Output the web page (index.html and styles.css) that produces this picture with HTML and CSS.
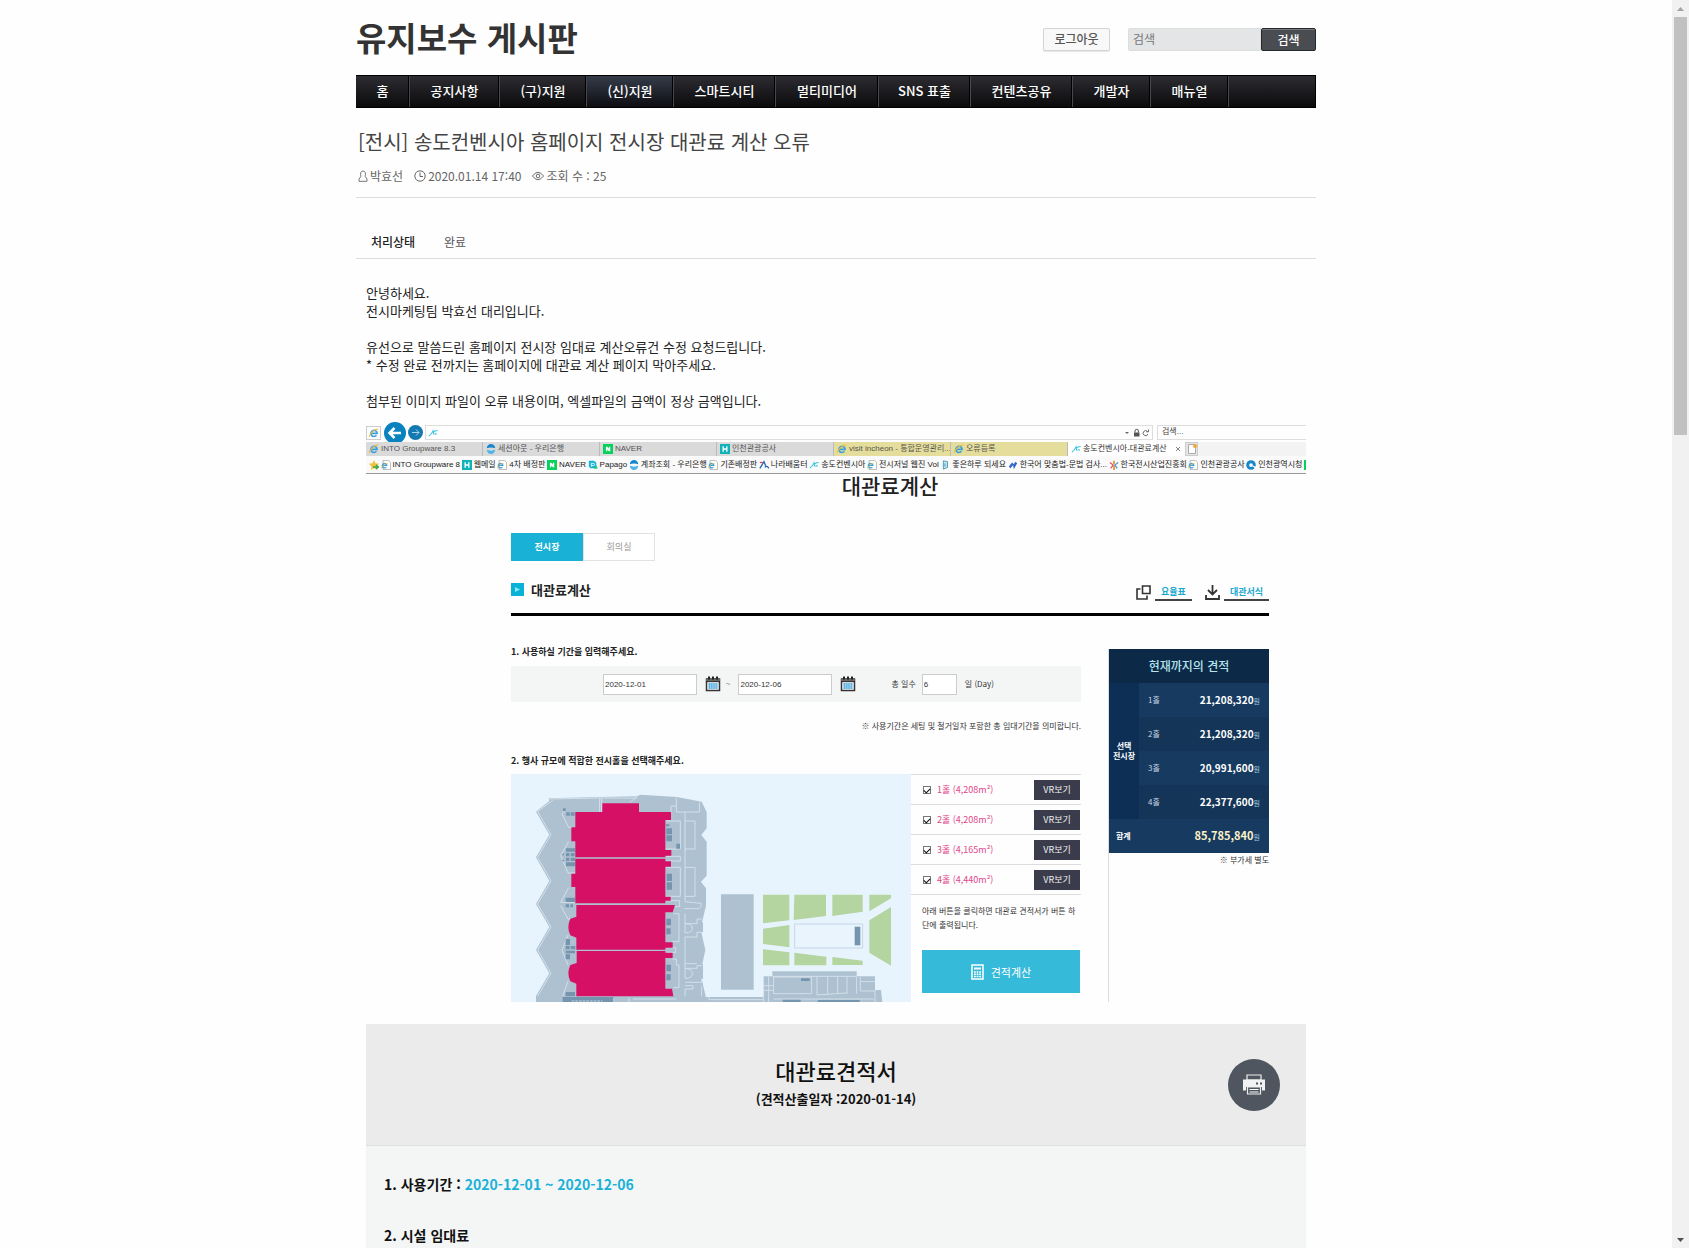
FILE: index.html
```html
<!DOCTYPE html>
<html lang="ko">
<head>
<meta charset="utf-8">
<meta name="viewport" content="width=device-width, initial-scale=1">
<title>유지보수 게시판</title>
<link rel="stylesheet" href="styles.css">
</head>
<body>
<svg class="defs" width="0" height="0" aria-hidden="true">
  <symbol id="ie" viewBox="0 0 12 12"><path d="M2.3 6.4H9.7A3.7 3.7 0 1 0 8.9 8.8" fill="none" stroke="#3aa0dc" stroke-width="2"/><path d="M.8 10.6C-.4 8 7.500 .3 11 1.400" fill="none" stroke="#f0b93a" stroke-width="1.300"/></symbol>
  <symbol id="iepage" viewBox="0 0 12 12"><path d="M2.500.5h6.500l2.500 2.500v8.500h-9z" fill="#fff" stroke="#999" stroke-width=".8"/><path d="M1.500 6.500H7A2.700 2.700 0 1 0 6.400 8.500" fill="none" stroke="#3aa0dc" stroke-width="1.600"/><path d="M.6 10C0 8 5 3.500 8 4" fill="none" stroke="#f0b93a"/></symbol>
  <symbol id="woori" viewBox="0 0 12 12"><path d="M1 5a5 5 0 0 1 10 0Q6 3.500 1 5z" fill="#1487cf"/><path d="M1 7a5 5 0 0 0 10 0Q6 9 1 7z" fill="#4bb4e8"/></symbol>
  <symbol id="naver" viewBox="0 0 12 12"><path d="M0 0h12v12H0z" fill="#06d15c"/><path d="M3.500 3.200h1.800l1.700 2.500V3.200h1.700v5.600H6.900L5.200 6.300v2.500H3.500z" fill="#fff"/></symbol>
  <symbol id="into" viewBox="0 0 12 12"><path d="M0 0h12v12H0z" fill="#12b3b8"/><path d="M3.800 2.800v6.400M8.200 2.800v6.400M3.800 6h4.400" stroke="#fff" stroke-width="1.600"/></symbol>
  <symbol id="songdo" viewBox="0 0 12 12"><path d="M1 9.500Q4.500 7.500 6 3.500L7 8M7 4.500Q9 3 11.500 3M8 7h2.500" fill="none" stroke="#3bc6e0" stroke-width="1.300"/></symbol>
  <symbol id="cal" viewBox="0 0 16 16"><path d="M1.500 3h13v11.500h-13z" fill="#fff" stroke="#333" stroke-width="1.500"/><path d="M1 2.500h14v3.200H1z" fill="#666"/><path d="M4 .5v3M8 .5v3M12 .5v3" stroke="#222" stroke-width="2"/><path d="M1 5.700h14" stroke="#222"/><path d="M3.500 8h9M3.500 10h9M3.500 12h9" stroke="#2496d8" stroke-width="1.500" stroke-dasharray="1.500 .4"/></symbol>
</svg>

<div class="page">
  <header class="site-header wrap">
    <h1>유지보수 게시판</h1>
    <div class="tools">
      <button class="logout" type="button">로그아웃</button>
      <form class="search">
        <input type="search" placeholder="검색" aria-label="검색어">
        <button type="button">검색</button>
      </form>
    </div>
  </header>

  <nav class="menu wrap">
    <a href="#">홈</a><a href="#">공지사항</a><a href="#">(구)지원</a><a href="#" class="on">(신)지원</a><a href="#">스마트시티</a><a href="#">멀티미디어</a><a href="#">SNS 표출</a><a href="#">컨텐츠공유</a><a href="#">개발자</a><a href="#">매뉴얼</a>
  </nav>

  <main class="wrap post">
    <header class="post-head">
      <h2>[전시] 송도컨벤시아 홈페이지 전시장 대관료 계산 오류</h2>
      <div class="meta">
        <span><svg width="10" height="12" viewBox="0 0 10 12"><path d="M3 6.200C1.800 4 2.600 1 5 1s3.200 3 2 5.200L9 9v2.300H1V9z" fill="none" stroke="#777"/></svg>박효선</span>
        <span><svg width="12" height="12" viewBox="0 0 12 12"><circle cx="6" cy="6" r="5.200" fill="none" stroke="#666"/><path d="M6 2.500V6.500H9" fill="none" stroke="#666"/></svg>2020.01.14 17:40</span>
        <span><svg width="12" height="10" viewBox="0 0 12 10"><path d="M.5 5Q6-2.500 11.500 5Q6 12.500 .5 5z" fill="none" stroke="#666"/><circle cx="6" cy="5" r="1.800" fill="none" stroke="#666"/></svg>조회 수 : 25</span>
      </div>
    </header>
    <dl class="status"><dt>처리상태</dt><dd>완료</dd></dl>

    <article class="content">
      <p>안녕하세요.<br>전시마케팅팀 박효선 대리입니다.</p>
      <p>유선으로 말씀드린 홈페이지 전시장 임대료 계산오류건 수정 요청드립니다.<br>* 수정 완료 전까지는 홈페이지에 대관료 계산 페이지 막아주세요.</p>
      <p>첨부된 이미지 파일이 오류 내용이며, 엑셀파일의 금액이 정상 금액입니다.</p>

      <section class="browser">
        <div class="address">
          <span class="home"><svg width="10" height="10"><use href="#ie"/></svg></span>
          <svg class="back" width="22" height="22" viewBox="0 0 22 22"><circle cx="11" cy="11" r="11" fill="#0a82bf"/><path d="M17 11H6M10.500 6L5.500 11l5 5" fill="none" stroke="#fff" stroke-width="2.500"/></svg>
          <svg class="fwd" width="15" height="15" viewBox="0 0 15 15"><circle cx="7.500" cy="7.500" r="7.500" fill="#1479b0"/><path d="M4 7.500h7M8 4.500l3 3-3 3" fill="none" stroke="#a9d3ea"/></svg>
          <div class="url">
            <svg width="10" height="10"><use href="#songdo"/></svg>
            <svg class="end" width="26" height="10" viewBox="0 0 26 10"><path d="M1 4h4L3 6z" fill="#666"/><path d="M10 4.500h5.500v4H10z" fill="#555"/><path d="M11 4.500V3a1.700 1.700 0 0 1 3.400 0v1.500" fill="none" stroke="#555"/><path d="M23.500 3.500A2.500 2.500 0 1 0 24 6M24.500 1.500v2.300h-2.300" fill="none" stroke="#666"/></svg>
          </div>
          <div class="find">검색...</div>
        </div>
        <div class="tabs">
          <button type="button"><svg width="10" height="10"><use href="#ie"/></svg>INTO Groupware 8.3</button>
          <button type="button"><svg width="10" height="10"><use href="#woori"/></svg>세션아웃 - 우리은행</button>
          <button type="button"><svg width="10" height="10"><use href="#naver"/></svg>NAVER</button>
          <button type="button"><svg width="10" height="10"><use href="#into"/></svg>인천관광공사</button>
          <button type="button" class="hot"><svg width="10" height="10"><use href="#ie"/></svg>visit incheon - 통합운영관리...</button>
          <button type="button" class="hot"><svg width="10" height="10"><use href="#ie"/></svg>오류등록</button>
          <button type="button" class="now"><svg width="10" height="10"><use href="#songdo"/></svg>송도컨벤시아-대관료계산<svg class="x" width="6" height="6" viewBox="0 0 6 6"><path d="M1 1l4 4M5 1L1 5" stroke="#888"/></svg></button>
          <span class="new"><svg width="10" height="10" viewBox="0 0 10 10"><path d="M1.500.5h7v9h-7z" fill="#fff" stroke="#aaa"/><circle cx="8" cy="2" r="2" fill="#f0a63a"/></svg></span>
        </div>
        <div class="marks">
          <a href="#"><svg width="10" height="10" viewBox="0 0 10 10"><path d="M5 0l1.500 3.300L10 3.700 7.500 6.200 8 10 5 8 2 10l.5-3.800L0 3.700l3.500-.4z" fill="#f0c23a"/><path d="M4 7h5M7 5l2.500 2L7 9" fill="none" stroke="#35a853" stroke-width="1.500"/></svg></a>
          <a href="#"><svg width="10" height="10"><use href="#iepage"/></svg>INTO Groupware 8</a>
          <a href="#"><svg width="10" height="10"><use href="#into"/></svg>웹메일</a>
          <a href="#"><svg width="10" height="10"><use href="#iepage"/></svg>4차 배정판</a>
          <a href="#"><svg width="10" height="10"><use href="#naver"/></svg>NAVER</a>
          <a href="#"><svg width="10" height="10" viewBox="0 0 12 12"><path d="M1 1h6l3 2v7H3L1 8z" fill="#18b5d8"/><path d="M4 8V4h2.500a1.300 1.300 0 0 1 0 2.600H4" stroke="#fff" fill="none"/><path d="M7 11l5-1-2-3z" fill="#2bd064"/></svg>Papago</a>
          <a href="#"><svg width="10" height="10"><use href="#woori"/></svg>계좌조회 - 우리은행</a>
          <a href="#"><svg width="10" height="10"><use href="#iepage"/></svg>기존배정판</a>
          <a href="#"><svg width="10" height="10" viewBox="0 0 12 12"><path d="M1 10L6 2l2 5" fill="none" stroke="#2467b3" stroke-width="1.600"/><path d="M1 3h4" stroke="#e3475a" stroke-width="1.500"/><path d="M7 9q2-3 5 1" fill="none" stroke="#2467b3" stroke-width="1.500"/></svg>나라배움터</a>
          <a href="#"><svg width="10" height="10"><use href="#songdo"/></svg>송도컨벤시아</a>
          <a href="#"><svg width="10" height="10"><use href="#iepage"/></svg>전시저널 웹진 Vol</a>
          <a href="#"><svg width="10" height="10" viewBox="0 0 12 12"><path d="M4 1l5 1v7l-5 2z" fill="#c6e6ef" stroke="#3c8fa8"/><path d="M6 4v4" stroke="#3c8fa8"/></svg>좋은하루 되세요</a>
          <a href="#"><svg width="10" height="10" viewBox="0 0 12 12"><path d="M3 5l2-2 2 2-4 5-2-2zM6 6l3-4 2 2-4 7z" fill="#3568c9"/></svg>한국어 맞춤법-문법 검사...</a>
          <a href="#"><svg width="10" height="10" viewBox="0 0 12 12"><path d="M6 1v4M6 7v5" stroke="#f08a24" stroke-width="2"/><path d="M1 3l4 3-3 4" fill="none" stroke="#e8505c" stroke-width="1.500"/><path d="M11 3L7 6l3 4" fill="none" stroke="#3b9ad6" stroke-width="1.500"/></svg>한국전시산업진흥회</a>
          <a href="#"><svg width="10" height="10"><use href="#iepage"/></svg>인천관광공사</a>
          <a href="#"><svg width="10" height="10" viewBox="0 0 12 12"><circle cx="6" cy="6" r="4" fill="none" stroke="#1687c9" stroke-width="3.500"/><path d="M6 6l6 2v3z" fill="#fff"/></svg>인천광역시청</a>
          <i></i>
        </div>
      </section>

      <section class="calc">
        <h3>대관료계산</h3>
        <div class="kinds"><button type="button" class="on">전시장</button><button type="button">회의실</button></div>
        <div class="calc-head">
          <h4><svg width="13" height="13" viewBox="0 0 13 13"><path d="M0 0h13v13H0z" fill="#08b2d6"/><path d="M4 4l5 2.500-5 2.500z" fill="#8fe6f5"/></svg>대관료계산</h4>
          <div class="files">
            <svg width="15" height="15" viewBox="0 0 15 15"><path d="M6.500 1h7.500v7.500H6.500zM4.500 4H1v10h10v-3.500" fill="none" stroke="#333" stroke-width="1.600"/></svg>
            <a href="#">요율표</a>
            <svg width="15" height="15" viewBox="0 0 15 15"><path d="M7.500 0v9.500M3 5l4.500 4.500L12 5M1 10v4h13v-4" fill="none" stroke="#333" stroke-width="1.800"/></svg>
            <a href="#">대관서식</a>
          </div>
        </div>
        <div class="cols">
          <div class="left">
            <h5>1. 사용하실 기간을 입력해주세요.</h5>
            <div class="period">
              <input class="date" type="text" value="2020-12-01" aria-label="시작일">
              <svg width="16" height="16"><use href="#cal"/></svg>
              <span>~</span>
              <input class="date" type="text" value="2020-12-06" aria-label="종료일">
              <svg width="16" height="16"><use href="#cal"/></svg>
              <label for="days">총 일수</label>
              <input class="days" id="days" type="text" value="6">
              <span class="unit">일 (Day)</span>
            </div>
            <p class="note">※ 사용기간은 세팅 및 철거일자 포함한 총 임대기간을 의미합니다.</p>
            <h5>2. 행사 규모에 적합한 전시홀을 선택해주세요.</h5>
            <div class="halls">
              <svg class="map" viewBox="32 25 1200 684" role="img" aria-label="전시장 배치도">
                <path d="M145 98L300 94 410 92 420 87 530 94 604 108 619 140V188L603 208 619 228V330L602 348 617 368V420L605 470H608V500H603L615 553 606 595H608V640H604L616 692V694H790V632H816V617H1069V632H1124V673H1142L1146 709H107V691L147 623 107 553 147 484 107 415 147 346 107 275 147 207 107 138 147 106z" fill="#aec1d1"/>
                <path d="M662 386h98v286h-98z" fill="#aec1d1"/>
                <g fill="none" stroke="#d3e0ea" stroke-width="3">
                  <path d="M147 100L300 97H410M157 104L112 138l40 69-40 68 40 71-40 69 40 69-40 69 40 70-40 68M298 97v42M304 97v42M388 111l24-20M528 97v42h70v-30M528 121h-16v20M498 166h42v84h-44M554 140v110h30V166h-30M498 272h42v14h-42M554 250v142h30V305h-30M498 305h42v87h-44M498 405h40v18h-40M554 392v16l48 5v10l-6 6h-44M520 444h16v84h-22M554 444v30h36v-14h15M554 474v28q22 0 22-14t-22-14M554 514h36v-14h15M554 514v80h36M500 546h26v14h-26M516 580h12v18h8v68h-16M554 594v14h36v-8h15M554 608v30q22 0 22-14t-22-16M554 650h50v-12M554 660h24v10h-24v22M604 692v-30"/>
                  <path d="M193 135l-8 10 20 40h20M205 228l-24 42 22 52h22M205 366l-24 44h44M181 420l22 40h22M203 508l-18 46 18 44M203 646l-16 45M340 696v13M386 696v13M398 700h130M626 694v8h163M790 632v77M805 632v77M790 660h28M790 674h28M820 634h114v50H820zM950 634v54l90-6M982 634v50M1012 634v50M1040 634v50M1069 634v50M1080 648h43M1080 634v42h44M1124 673v36M816 632h253M820 700h300"/>
                </g>
                <g fill="#7594ae">
                  <path d="M188 128h8v8h-8zM198 140h10v10h-10zM211 140h12v10h-12zM498 188h17v18h-17zM498 209h17v18h-17zM528 234h11v15h-11zM499 324h16v22h-16zM499 350h16v22h-16zM497 176h10v6h-10zM197 248h28v10h-28zM197 262h10v10h-10zM211 262h12v10h-12zM197 276h10v10h-10zM211 276h14v10h-14zM197 290h28v12h-28zM186 264h5v5h-5zM186 282h5v5h-5zM196 396h28v13h-28zM196 416h10v9h-10zM210 416h8v9h-8zM498 459h14v20h-14zM498 488h13v18h-13zM196 520h13v18h-13zM196 541h12v10h-12zM211 541h14v10h-14zM196 555h28v8h-28zM196 566h13v15h-13zM498 597h14v20h-14zM498 626h13v18h-13zM196 679h28v13h-28zM187 694h152v15H187zM902 638h26v8h-26zM847 702h54v7h-54zM952 703h126v6H952z"/>
                </g>
                <path d="M214 706h92" stroke="#c3d2de" stroke-width="3" stroke-dasharray="8 3"/>
                <path d="M306 113h110v26h96v24h-17v90h18v17h-18v5H225V227h-12v-42h12v-46h81zM225 279h270v8h17v16h-17v90h16v12h-16v8H225v-49h-12v-40h12zM228 418h296l-7 22h-22v90h22v16h-22v6H228v-36l-18-7q-12-25 0-50l18-6zM229 556h266v5h22v16h-22v92h20l4 23H228v-38l-18-7q-12-25 0-49l19-6z" fill="#d61165"/>
                <g fill="#b4d59f"><path d="M788 387h79v77l-79 9zM882 387h95v64l-97 12zM996 387h91v51l-91 13zM1107 387h65v11l-65 39zM1172 424v176l-65-39V464zM788 489l79-11v67l-79-10zM788 551l79 9v39h-79zM882 561l96 12v26h-96zM996 574l91 11v13h-91z"/></g>
                <path d="M883 475h204v72H883z" fill="#eaf4fc" stroke="#c6d5e6" stroke-width="3"/>
                <path d="M1063 483h17v56h-17z" fill="#7594ae"/>
              </svg>
              <div class="pick">
                <ul>
                  <li><label><input type="checkbox" checked>1홀 (4,208m²)</label><button type="button">VR보기</button></li>
                  <li><label><input type="checkbox" checked>2홀 (4,208m²)</label><button type="button">VR보기</button></li>
                  <li><label><input type="checkbox" checked>3홀 (4,165m²)</label><button type="button">VR보기</button></li>
                  <li><label><input type="checkbox" checked>4홀 (4,440m²)</label><button type="button">VR보기</button></li>
                </ul>
                <p>아래 버튼을 클릭하면 대관료 견적서가 버튼 하<br>단에 출력됩니다.</p>
                <button type="button" class="go"><svg width="13" height="16" viewBox="0 0 13 16"><path d="M1 1h11v14H1z" fill="none" stroke="#fff" stroke-width="1.500"/><path d="M3 4.500h7" stroke="#fff" stroke-width="2"/><path d="M3 8h7M3 10.300h7M3 12.600h7" stroke="#fff" stroke-width="1.500" stroke-dasharray="1.800 .8"/></svg>견적계산</button>
              </div>
            </div>
          </div>
          <aside class="quote">
            <table>
              <thead><tr><th colspan="3">현재까지의 견적</th></tr></thead>
              <tbody>
                <tr><th class="grp" rowspan="4">선택<br>전시장</th><td>1홀</td><td class="amt"><b>21,208,320</b>원</td></tr>
                <tr class="dark"><td>2홀</td><td class="amt"><b>21,208,320</b>원</td></tr>
                <tr><td>3홀</td><td class="amt"><b>20,991,600</b>원</td></tr>
                <tr class="dark"><td>4홀</td><td class="amt"><b>22,377,600</b>원</td></tr>
              </tbody>
              <tfoot><tr><th>합계</th><td class="amt" colspan="2"><b>85,785,840</b>원</td></tr></tfoot>
            </table>
            <p>※ 부가세 별도</p>
          </aside>
        </div>
      </section>

      <section class="estimate">
        <header>
          <div class="ttl"><h3>대관료견적서</h3><p>(견적산출일자 :2020-01-14)</p></div>
          <button type="button" aria-label="인쇄"><svg width="24" height="22" viewBox="0 0 24 22"><path d="M5 1h14v5H5z" fill="none" stroke="#eee" stroke-width="1.200"/><path d="M1 5.500h22v11h-3V13H4v3.500H1z" fill="#f2f2f2"/><path d="M5.500 13h13v7h-13z" fill="#4f5660" stroke="#eee" stroke-width="1.200"/><path d="M7.500 15.500h9M7.500 18h9" stroke="#fff"/><path d="M14 8.500h2v2h-2zM18 8.500h2v2h-2z" fill="#4f5660"/></svg></button>
        </header>
        <div class="est-body">
          <h4>1. 사용기간 : <span>2020-12-01 ~ 2020-12-06</span></h4>
          <h4>2. 시설 임대료</h4>
        </div>
      </section>
    </article>
  </main>
</div>
<div class="scroll" aria-hidden="true">
  <svg width="17" height="17" viewBox="0 0 17 17"><path d="M5 11h7L8.500 7z" fill="#a3a3a3"/></svg>
  <div class="thumb"></div>
  <svg class="down" width="17" height="17" viewBox="0 0 17 17"><path d="M5 7h7l-3.500 4z" fill="#505050"/></svg>
</div>
</body>
</html>
```
FILE: styles.css
```css
* { box-sizing: border-box; }
body, h1, h2, h3, h4, h5, p, dl, dd, ul { margin: 0; padding: 0; }
body {
  display: flex;
  height: 100vh;
  overflow: hidden;
  background: #fefefe;
  color: #333;
  font: 13px/18px "Noto Sans CJK KR", "Noto Sans", sans-serif;
}
button, input { font: inherit; margin: 0; padding: 0; border: 0; border-radius: 0; }
button { cursor: pointer; white-space: nowrap; }
a { color: inherit; text-decoration: none; }
svg { flex: none; }
.defs { position: absolute; }

.page { flex: 1; display: flex; flex-direction: column; min-width: 0; overflow: hidden; }
.wrap { width: 100%; max-width: 960px; margin: 0 auto; }

.site-header { display: flex; justify-content: space-between; align-items: center; height: 75px; padding-top: 4px; flex: none; }
h1 { padding-bottom: 6px; font-size: 33px; line-height: 48px; font-weight: 700; }
.tools { display: flex; gap: 18px; }
.logout { width: 67px; height: 23px; padding-bottom: 2px; border: 1px solid #d5d5d5; border-radius: 2px; background: #f8f8f8; box-shadow: 0 1px 1px #e4e4e4; color: #555; font-size: 12px; line-height: 18px; font-weight: 500; }
.search { display: flex; width: 188px; height: 23px; }
.search input { flex: 1; min-width: 0; padding: 0 4px 2px; border: 1px solid #dcdddd; border-radius: 2px 0 0 2px; background: #e4e5e7; font-size: 12px; line-height: 18px; }
.search input::placeholder { color: #777; }
.search button { width: 55px; border: 1px solid #25282d; border-radius: 2px; background: #494d52; box-shadow: inset 0 1px #777b80; color: #fff; font-size: 12px; line-height: 18px; font-weight: 500; }

.menu { display: grid; grid-template-columns: 54px 90px 87px 87px 102px 103px 92px 102px 78px 78px; height: 33px; flex: none; border: solid #000; border-width: 1px 1px 1px 0; background: linear-gradient(#2c2c32, #0b0b0c); }
.menu a { border-right: 1px solid #48484c; box-shadow: inset -1px 0 #000; color: #fff; font-weight: 500; line-height: 30px; text-align: center; white-space: nowrap; }
.menu .on { background: linear-gradient(#353c49, #0d0e12); }

.post { flex: 1; display: flex; flex-direction: column; }
.post-head { padding: 18px 2px 12px; border-bottom: 1px solid #ddd; }
h2 { font-size: 20px; line-height: 32px; font-weight: 400; color: #444; }
.meta { display: flex; gap: 11px; margin-top: 9px; color: #666; font-size: 12px; }
.meta span { display: flex; align-items: center; gap: 2px; }
.status { display: flex; margin-top: 28px; padding: 7px 15px; border-bottom: 1px solid #ddd; font-size: 12px; }
dt { width: 73px; color: #222; font-weight: 500; }
dd { color: #555; }
.content { flex: 1; display: flex; flex-direction: column; padding: 25px 10px 0; color: #222; }
.content > p { margin-bottom: 18px; }

.browser { margin-top: -6px; font: 8px/12px "Liberation Sans", "Noto Sans CJK KR", sans-serif; color: #444; }
.address { display: flex; align-items: center; height: 20px; padding-top: 1px; }
.home { display: grid; place-items: center; width: 15px; height: 14px; border: 1px solid #ccc; }
.back { margin: -1px 0 -1px 3px; }
.fwd { margin: 0 2px; }
.url { flex: 1; display: flex; align-items: center; height: 15px; padding: 0 2px; border: 1px solid #ddd; }
.url .end { margin-left: auto; }
.find { width: 149px; height: 15px; margin-left: 4px; padding-left: 4px; border: 1px solid #ddd; border-right: 0; }
.tabs { display: flex; height: 14px; background: #f3f3f3; }
.tabs button { display: flex; align-items: center; gap: 2px; flex: 0 1 117px; min-width: 0; padding: 0 1px 0 3px; border-right: 1px solid #bbb; background: #dadada; color: #555; overflow: hidden; }
.tabs .hot { background: #e5dd9b; }
.tabs .now { padding-right: 4px; background: #fff; color: #333; border-right: 0; }
.tabs .x { margin-left: auto; }
.new { display: grid; place-items: center; width: 13px; border: 1px solid #ccc; background: #e6e6e6; }
.marks { display: flex; justify-content: space-between; align-items: center; height: 18px; padding-left: 3px; border-bottom: 1px solid #999; background: #fafafa; color: #222; white-space: nowrap; }
.marks a { display: flex; align-items: center; gap: 2px; }
.marks i { width: 2px; height: 10px; background: #06d15c; }

.calc { padding: 0 37px 0 145px; font-size: 8px; line-height: 14px; color: #333; }
.calc h3 { text-align: center; font-size: 21px; line-height: 22px; font-weight: 500; color: #222; }
.kinds { display: flex; height: 28px; margin-top: 37px; }
.kinds button { width: 72px; border: 1px solid #e2e2e2; background: #fff; color: #999; font-size: 9px; }
.kinds .on { border-color: #19b1d6; background: #19b1d6; color: #fff; font-weight: 700; }
.calc-head { display: flex; justify-content: space-between; align-items: center; height: 55px; padding-top: 5px; border-bottom: 3px solid #000; }
.calc h4 { display: flex; align-items: center; gap: 7px; font-size: 13px; line-height: 20px; font-weight: 700; color: #222; }
.files { display: flex; align-items: center; gap: 4px; margin-top: 6px; }
.files a { padding: 0 6px; border-bottom: 2px solid #444; color: #1aa9cf; font-size: 9px; font-weight: 700; }
.files a + svg { margin-left: 9px; }
.cols { display: flex; justify-content: space-between; margin-top: 29px; }
.left { width: 570px; }
.calc h5 { font-size: 9px; line-height: 14px; font-weight: 700; color: #222; }
.period { display: flex; align-items: center; height: 36px; margin-top: 7px; padding-left: 92px; background: #f4f6f6; }
.period input { height: 21px; padding: 0 1px; border: 1px solid #ccc; background: #fff; font: 8px/14px "Liberation Sans", sans-serif; color: #333; }
.period .date { width: 94px; }
.period svg { margin: 0 5px 0 8px; }
.period span { margin-right: 8px; }
.period label { margin: 0 6px 0 30px; }
.period .days { width: 35px; }
.period .unit { margin-left: 8px; }
.note { margin: 17px 0 21px; text-align: right; }
.halls { display: flex; height: 228px; margin-top: 6px; }
.map { width: 400px; height: 228px; background: #e8f4fd; }
.pick { flex: 1; border-top: 1px solid #ddd; }
.pick ul { list-style: none; }
.pick li { display: flex; justify-content: space-between; align-items: center; height: 30px; padding: 0 1px 0 12px; border-bottom: 1px solid #ddd; }
.pick label { display: flex; align-items: center; gap: 6px; color: #e0468b; font-size: 9px; }
.pick input { appearance: none; display: grid; place-items: center; width: 8px; height: 8px; border: 1px solid #777; background: #fff; color: #111; }
.pick input::after { content: ""; width: 5px; height: 3px; border: solid #111; border-width: 0 0 1px 1px; rotate: -45deg; }
.pick li button { width: 46px; height: 20px; background: #3a3c4c; color: #eee; font-size: 9px; }
.pick p { margin: 9px 0 0 11px; white-space: nowrap; }
.go { display: flex; align-items: center; justify-content: center; gap: 7px; width: 158px; height: 43px; margin: 18px 0 0 11px; background: #36bad9; color: #fff; font-size: 11px; }
.quote { width: 161px; border-left: 1px solid #ddd; margin-top: 4px; }
.quote table { width: 160px; border-collapse: collapse; background: #173a60; color: #c7d6e4; }
.quote tr { height: 34px; }
.quote th, .quote td { padding: 0; text-align: left; font-weight: 400; }
.quote thead th { background: #0c2a47; color: #b6e2ee; text-align: center; font-size: 12px; font-weight: 500; }
.quote tbody .grp { width: 30px; background: #0d2f55; color: #fff; text-align: center; line-height: 10px; font-weight: 700; font-size: 8px; }
.quote tbody td:not(.amt) { padding-left: 9px; }
.dark { background: #143557; }
.quote .amt { padding-right: 9px; text-align: right; color: #9fcbe0; font-size: 7px; }
.amt b { color: #fff; font-size: 10px; }
.quote tfoot th { padding-left: 7px; color: #fff; font-weight: 700; }
.quote tfoot b { color: #fbf1c8; font-size: 11px; }
.quote p { text-align: right; }

.estimate { flex: 1; display: flex; flex-direction: column; margin-top: 22px; background: #f4f6f6; color: #111; }
.estimate header { display: grid; grid-template-columns: 1fr auto 1fr; align-items: center; height: 122px; padding-right: 26px; border-bottom: 1px solid #dde0e0; background: #ebebeb; }
.ttl { grid-column: 2; margin-left: 26px; padding-bottom: 7px; text-align: center; }
.estimate h3 { margin-bottom: 3px; font-size: 22px; line-height: 32px; font-weight: 500; }
.ttl p { font-size: 13px; line-height: 20px; font-weight: 700; }
.estimate button { display: grid; place-items: center; justify-self: end; width: 52px; height: 52px; border-radius: 50%; background: #4f5660; }
.est-body { display: grid; gap: 31px; padding: 28px 18px 0; }
.est-body h4 { font-size: 14px; line-height: 20px; font-weight: 700; }
.est-body span { color: #19b1d6; }

.scroll { display: flex; flex-direction: column; width: 17px; background: #f1f1f1; }
.thumb { height: 418px; margin: 0 2px; background: #c1c1c1; }
.down { margin-top: auto; }
```
